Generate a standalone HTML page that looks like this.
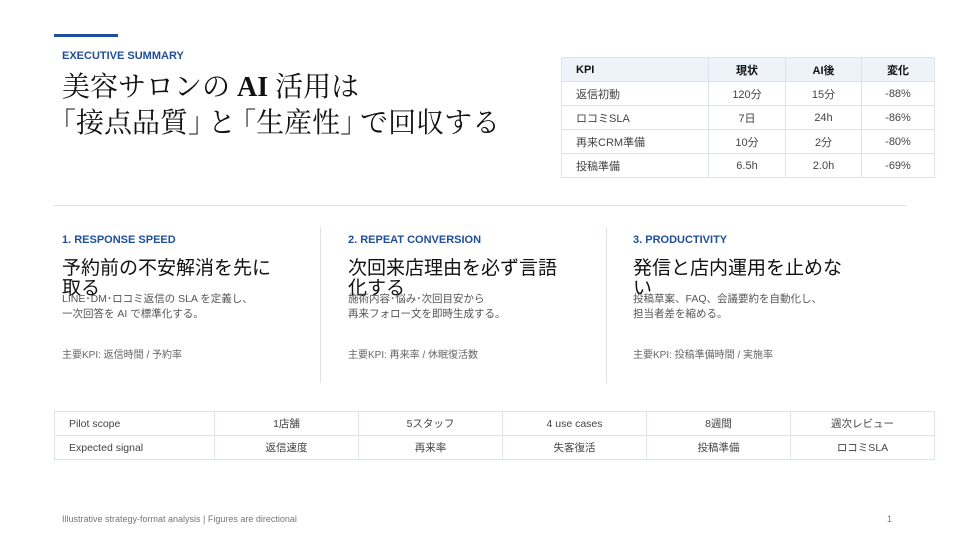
<!DOCTYPE html>
<html><head><meta charset="utf-8"><style>
*{margin:0;padding:0;box-sizing:border-box}
body{width:960px;height:540px;background:#fff;position:relative;overflow:hidden;font-family:"Liberation Sans","Noto Sans CJK JP",sans-serif;color:#222}
.a{position:absolute}
.bar{left:54px;top:34px;width:64px;height:3px;background:#1f4e9a}
.eyebrow{left:62px;top:50px;font-size:11px;font-weight:bold;color:#1f4e9a}
.title{left:62px;top:70px;font-family:"Liberation Serif","Noto Serif CJK SC",serif;font-size:28px;line-height:36px;color:#111;white-space:nowrap}
.o{margin-left:-8px}.c{margin-right:-8px}
table{border-collapse:collapse;position:absolute;font-size:11px;color:#444;table-layout:fixed}
td{border:1px solid #dde3ec;height:24px;text-align:center;padding:0}
.kpi{left:561px;top:57px;width:373px}
.kpi tr:first-child td{background:#eef2f9;font-weight:bold;color:#111}
.kpi td:first-child{text-align:left;padding-left:14px}
.hr{left:54px;top:205px;width:852px;height:1px;background:#dde3ec}
.vr{top:227px;width:1px;height:156px;background:#dde3ec}
.col{top:234px;width:230px}
.col h3{font-size:11px;font-weight:bold;color:#1f4e9a;height:25px}
.col h2{font-size:19px;font-weight:normal;line-height:20px;color:#111;height:36px;overflow:visible;width:214px}
.col p{font-size:10.5px;line-height:15px;color:#555;position:relative;top:-3px}
.col .k{font-size:10px;color:#666;position:absolute;top:112px}
.pilot{left:54px;top:411px;width:880px;font-size:10.5px}
.pilot td:first-child{text-align:left;padding-left:14px}
.foot{left:62px;top:514px;font-size:9px;color:#777}
.pg{left:887px;top:514px;font-size:9px;color:#777}
</style></head><body>
<div class="a bar"></div>
<div class="a eyebrow">EXECUTIVE SUMMARY</div>
<div class="a title">美容サロンの <b>AI</b> 活用は<br><span class="o" style="margin-left:-14px">「</span>接点品質<span class="c">」</span>と<span class="o">「</span>生産性<span class="c">」</span>で回収する</div>
<table class="kpi">
<colgroup><col style="width:147px"><col style="width:77px"><col style="width:76px"><col style="width:73px"></colgroup>
<tr><td>KPI</td><td>現状</td><td>AI後</td><td>変化</td></tr>
<tr><td>返信初動</td><td>120分</td><td>15分</td><td>-88%</td></tr>
<tr><td>ロコミSLA</td><td>7日</td><td>24h</td><td>-86%</td></tr>
<tr><td>再来CRM準備</td><td>10分</td><td>2分</td><td>-80%</td></tr>
<tr><td>投稿準備</td><td>6.5h</td><td>2.0h</td><td>-69%</td></tr>
</table>
<div class="a hr"></div>
<div class="a vr" style="left:320px"></div>
<div class="a vr" style="left:606px"></div>
<div class="a col" style="left:62px"><h3>1. RESPONSE SPEED</h3><h2>予約前の不安解消を先に取る</h2><p>LINE･DM･ロコミ返信の SLA を定義し、<br>一次回答を AI で標準化する。</p><div class="k">主要KPI: 返信時間 / 予約率</div></div>
<div class="a col" style="left:348px"><h3>2. REPEAT CONVERSION</h3><h2>次回来店理由を必ず言語化する</h2><p>施術内容･悩み･次回目安から<br>再来フォロー文を即時生成する。</p><div class="k">主要KPI: 再来率 / 休眠復活数</div></div>
<div class="a col" style="left:633px"><h3>3. PRODUCTIVITY</h3><h2>発信と店内運用を止めない</h2><p>投稿草案、FAQ、会議要約を自動化し、<br>担当者差を縮める。</p><div class="k">主要KPI: 投稿準備時間 / 実施率</div></div>
<table class="pilot">
<colgroup><col style="width:160px"><col style="width:144px"><col style="width:144px"><col style="width:144px"><col style="width:144px"><col style="width:144px"></colgroup>
<tr><td>Pilot scope</td><td>1店舗</td><td>5スタッフ</td><td>4 use cases</td><td>8週間</td><td>週次レビュー</td></tr>
<tr><td>Expected signal</td><td>返信速度</td><td>再来率</td><td>失客復活</td><td>投稿準備</td><td>ロコミSLA</td></tr>
</table>
<div class="a foot">Illustrative strategy-format analysis | Figures are directional</div>
<div class="a pg">1</div>
</body></html>
